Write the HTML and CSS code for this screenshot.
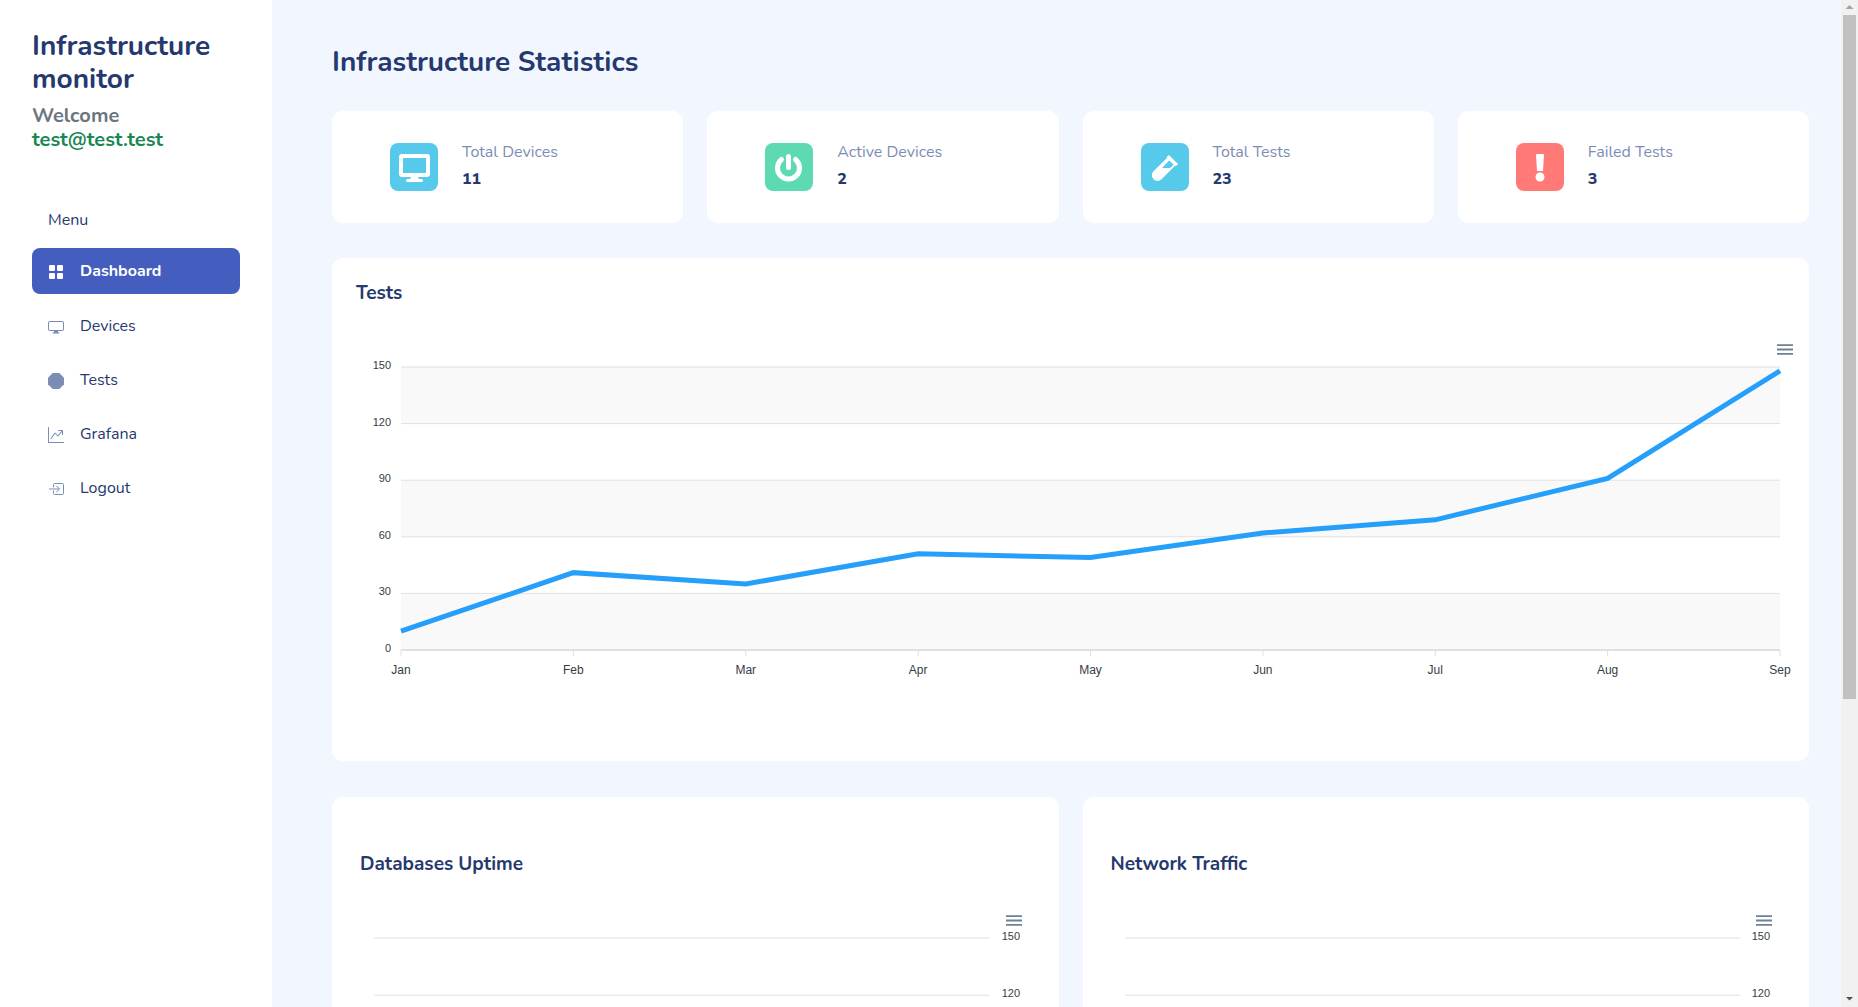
FILE: index.html
```html
<!DOCTYPE html>
<html lang="en">
<head>
<meta charset="utf-8">
<title>Infrastructure monitor</title>
<link rel="stylesheet" href="styles.css">
</head>
<body>
<aside class="sidebar">
  <header class="brand">
    <h1 class="brand-name">Infrastructure monitor</h1>
    <p class="welcome">Welcome<br><span class="user">test@test.test</span></p>
  </header>
  <nav class="menu" aria-label="Menu">
    <p class="menu-title">Menu</p>
    <a class="menu-link active" href="#"><svg class="menu-icon" viewBox="0 0 16 16" fill="currentColor"><rect x="1" y="1" width="6" height="6" rx="1"/><rect x="9" y="1" width="6" height="6" rx="1"/><rect x="1" y="9" width="6" height="6" rx="1"/><rect x="9" y="9" width="6" height="6" rx="1"/></svg>Dashboard</a>
    <a class="menu-link" href="#"><svg class="menu-icon" viewBox="0 0 16 16" fill="currentColor"><path d="M2 2h12a2 2 0 0 1 2 2v6a2 2 0 0 1-2 2h-4c0 .7.1 1.200.25 1.500H11a.5.5 0 0 1 0 1H5a.5.5 0 0 1 0-1h.75c.15-.3.25-.8.25-1.500H2a2 2 0 0 1-2-2V4a2 2 0 0 1 2-2zm0 1a1 1 0 0 0-1 1v6a1 1 0 0 0 1 1h12a1 1 0 0 0 1-1V4a1 1 0 0 0-1-1z"/></svg>Devices</a>
    <a class="menu-link" href="#"><svg class="menu-icon" viewBox="0 0 16 16" fill="currentColor"><path d="M4.700 0h6.600L16 4.700v6.600L11.300 16H4.700L0 11.300V4.700z"/></svg>Tests</a>
    <a class="menu-link" href="#"><svg class="menu-icon" viewBox="0 0 16 16" fill="currentColor"><path d="M0 0h1v15h15v1H0zM10 3.500a.5.5 0 0 1 .5-.5h4a.5.5 0 0 1 .5.5v4a.5.5 0 0 1-1 0V4.900l-3.600 4.400a.5.5 0 0 1-.75.05L7.060 6.730l-3.650 5.070a.5.5 0 0 1-.82-.6l4-5.500a.5.5 0 0 1 .76-.05l2.600 2.600L13.450 4H10.500a.5.5 0 0 1-.5-.5z"/></svg>Grafana</a>
    <a class="menu-link" href="#"><svg class="menu-icon" viewBox="0 0 16 16" fill="none" stroke="currentColor" stroke-linecap="round" stroke-linejoin="round"><path d="M5.500 6V3.500a1 1 0 0 1 1-1h8a1 1 0 0 1 1 1v9a1 1 0 0 1-1 1h-8a1 1 0 0 1-1-1V10M1.500 8h9.500M8.500 5l3 3-3 3"/></svg>Logout</a>
  </nav>
</aside>
<main class="content">
  <h2 class="page-title">Infrastructure Statistics</h2>
  <section class="stats">
    <article class="card stat">
      <span class="stat-icon blue"><svg viewBox="0 0 48 48" fill="#fff"><path fill-rule="evenodd" d="M12 11h25a3 3 0 0 1 3 3v17a3 3 0 0 1-3 3h-9l1 2h2.500a1.500 1.500 0 0 1 0 3h-14a1.500 1.500 0 0 1 0-3H20l1-2h-9a3 3 0 0 1-3-3V14a3 3 0 0 1 3-3zm1 4v15h23V15z"/></svg></span>
      <div><h3 class="stat-label">Total Devices</h3><p class="stat-value">11</p></div>
    </article>
    <article class="card stat">
      <span class="stat-icon green"><svg viewBox="0 0 48 48" fill="none" stroke="#fff" stroke-width="5" stroke-linecap="round"><path d="M23.500 13.500v11M16.500 16.500a11 11 0 1 0 14 0"/></svg></span>
      <div><h3 class="stat-label">Active Devices</h3><p class="stat-value">2</p></div>
    </article>
    <article class="card stat">
      <span class="stat-icon blue"><svg viewBox="0 0 48 48" fill="#fff"><path fill-rule="evenodd" d="M28 12l9 9-2 2-1-.3L20.500 36.300a5.600 5.600 0 0 1-8-8L26 15l-.3-1zM28.300 17.500L21 25h8l3.700-3.200z"/></svg></span>
      <div><h3 class="stat-label">Total Tests</h3><p class="stat-value">23</p></div>
    </article>
    <article class="card stat">
      <span class="stat-icon red"><svg viewBox="0 0 48 48" fill="#fff"><path d="M21 11h6a1 1 0 0 1 1 1l-1 16h-6l-1-16a1 1 0 0 1 1-1z"/><circle cx="24" cy="34" r="4.500"/></svg></span>
      <div><h3 class="stat-label">Failed Tests</h3><p class="stat-value">3</p></div>
    </article>
  </section>
  <section class="card tests">
    <h3 class="card-title">Tests</h3>
    <div class="toolbar"><button class="chart-menu" type="button" aria-label="Chart menu"><svg viewBox="3 6 18 12"><path d="M3 18h18v-2H3v2zm0-5h18v-2H3v2zm0-7v2h18V6H3z"/></svg></button></div>
    <svg class="plot plot-main" role="img" aria-label="Tests per month">
      <g fill="#f9f9f9"><rect width="100%" height="20%"/><rect y="40%" width="100%" height="20%"/><rect y="80%" width="100%" height="20%"/></g>
      <g class="grid"><line x2="100%"/><line y1="20%" x2="100%" y2="20%"/><line y1="40%" x2="100%" y2="40%"/><line y1="60%" x2="100%" y2="60%"/><line y1="80%" x2="100%" y2="80%"/><line class="axis" y1="100%" x2="100%" y2="100%"/></g>
      <svg class="ticks" y="100%" width="100%" height="6"><path d="M0 0v6"/><line x1="12.500%" x2="12.500%" y2="6"/><line x1="25%" x2="25%" y2="6"/><line x1="37.500%" x2="37.500%" y2="6"/><line x1="50%" x2="50%" y2="6"/><line x1="62.500%" x2="62.500%" y2="6"/><line x1="75%" x2="75%" y2="6"/><line x1="87.500%" x2="87.500%" y2="6"/><line x1="100%" x2="100%" y2="6"/></svg>
      <svg class="series" width="100%" height="100%" viewBox="0 0 8 150" preserveAspectRatio="none"><polyline points="0,140 1,109 2,115 3,99 4,101 5,88 6,81 7,59 8,2"/></svg>
      <g class="y-labels"><text x="-10" y="0" dy="2">150</text><text x="-10" y="20%" dy="2">120</text><text x="-10" y="40%" dy="2">90</text><text x="-10" y="60%" dy="2">60</text><text x="-10" y="80%" dy="2">30</text><text x="-10" y="100%" dy="2">0</text></g>
      <g class="x-labels"><text x="0" y="100%" dy="24">Jan</text><text x="12.500%" y="100%" dy="24">Feb</text><text x="25%" y="100%" dy="24">Mar</text><text x="37.500%" y="100%" dy="24">Apr</text><text x="50%" y="100%" dy="24">May</text><text x="62.500%" y="100%" dy="24">Jun</text><text x="75%" y="100%" dy="24">Jul</text><text x="87.500%" y="100%" dy="24">Aug</text><text x="100%" y="100%" dy="24">Sep</text></g>
    </svg>
  </section>
  <section class="pair">
    <article class="card small">
      <h3 class="card-title">Databases Uptime</h3>
      <div class="toolbar"><button class="chart-menu" type="button" aria-label="Chart menu"><svg viewBox="3 6 18 12"><path d="M3 18h18v-2H3v2zm0-5h18v-2H3v2zm0-7v2h18V6H3z"/></svg></button></div>
      <div class="small-chart"><svg class="plot"><g class="grid"><line x2="100%"/><line y1="20%" x2="100%" y2="20%"/></g></svg>
      <svg class="plot scale"><g class="y-labels"><text x="100%" y="0" dy="2">150</text><text x="100%" y="20%" dy="2">120</text></g></svg></div>
    </article>
    <article class="card small">
      <h3 class="card-title">Network Traffic</h3>
      <div class="toolbar"><button class="chart-menu" type="button" aria-label="Chart menu"><svg viewBox="3 6 18 12"><path d="M3 18h18v-2H3v2zm0-5h18v-2H3v2zm0-7v2h18V6H3z"/></svg></button></div>
      <div class="small-chart"><svg class="plot"><g class="grid"><line x2="100%"/><line y1="20%" x2="100%" y2="20%"/></g></svg>
      <svg class="plot scale"><g class="y-labels"><text x="100%" y="0" dy="2">150</text><text x="100%" y="20%" dy="2">120</text></g></svg></div>
    </article>
  </section>
</main>
<div class="scrollbar" aria-hidden="true">
  <svg class="arrow dim" viewBox="0 0 17 15"><path d="M4.500 9l4-4 4 4z"/></svg>
  <div class="track"><div class="thumb"></div></div>
  <svg class="arrow" viewBox="0 0 17 15"><path d="M5 5h7L8.500 8.500z"/></svg>
</div>
</body>
</html>
```
FILE: styles.css
```css
* { box-sizing: border-box; }
body {
  margin: 0;
  display: flex;
  height: 100vh;
  overflow: hidden;
  background: #f2f7ff;
  color: #25396f;
  font: 16px/24px Nunito, "Open Sans", sans-serif;
}
h1, h2, h3, p { margin: 0; }
.sidebar { flex: none; width: 272px; padding: 30px 32px; background: #fff; }
.brand-name { font-size: 28px; line-height: 33px; font-weight: 700; }
.welcome { margin-top: 8px; font-size: 20px; line-height: 24px; font-weight: 700; color: #6c757d; }
.user { color: #198754; }
.menu { display: flex; flex-direction: column; gap: 8px; margin-top: 56px; }
.menu-title { padding: 0 16px; margin-bottom: 8px; }
.menu-link {
  display: flex; align-items: center; gap: 16px;
  height: 46px; padding: 1px 16px 0;
  border-radius: 8px; color: inherit; text-decoration: none;
}
.menu-icon { width: 16px; height: 16px; margin-top: 2px; color: #7c8db5; }
.active { padding-top: 0; background: #435ebe; color: #fff; font-weight: 700; }
.active .menu-icon { color: #fff; }
.content { flex: 1; min-width: 0; padding: 45px 32px 0 60px; }
.page-title { font-size: 28px; line-height: 35px; font-weight: 700; }
.card { background: #fff; border-radius: 11px; }
.stats { display: grid; grid-template-columns: repeat(4, 1fr); gap: 24px; margin-top: 31px; }
.stat { display: flex; align-items: flex-start; gap: 24px; height: 112px; padding: 32px 58px 0; }
.stat > div { margin-top: -3px; }
.stat-icon { flex: none; width: 48px; height: 48px; border-radius: 8px; }
.stat-icon svg { display: block; }
.blue { background: #57caeb; }
.green { background: #5ddab4; }
.red { background: #ff7976; }
.stat-label { font-size: 16px; line-height: 24px; font-weight: 400; color: #7c8db5; }
.stat-value { margin-top: 3px; line-height: 24px; font-weight: 800; }
.tests { height: 503px; margin-top: 35px; padding: 23px 16px 0 24px; }
.card-title { font-size: 19px; line-height: 24px; font-weight: 700; }
.toolbar { display: flex; justify-content: flex-end; margin-top: 39px; }
.chart-menu { width: 16px; height: 11px; padding: 0; border: 0; background: none; }
.chart-menu svg { display: block; width: 16px; height: 11px; fill: #6e8192; }
.plot { display: block; flex: 1; min-width: 0; height: 283px; overflow: visible; }
.plot-main { width: calc(100% - 58px); margin: 12px 0 0 45px; }
.grid { stroke: #e0e0e0; }
.axis { stroke-width: 2; }
.ticks { stroke: #e0e0e0; overflow: visible; }
.series { overflow: visible; fill: none; stroke: #269ffb; }
.series polyline { stroke-width: 5px; vector-effect: non-scaling-stroke; }
.y-labels, .x-labels { fill: #373d3f; font-family: "Liberation Sans", Arial, sans-serif; }
.y-labels { font-size: 11px; text-anchor: end; }
.x-labels { font-size: 12px; text-anchor: middle; }
.pair { display: grid; grid-template-columns: 1fr 1fr; gap: 24px; margin-top: 36px; }
.small { height: 536px; padding: 55px 37px 0 28px; }
.small-chart { display: flex; margin: 12px 2px 0 14px; }
.small-chart .plot { height: 286px; }
.small-chart .scale { flex: none; width: 30px; }
.scrollbar { flex: none; display: flex; flex-direction: column; width: 17px; background: #f1f1f1; }
.arrow { width: 17px; height: 15px; fill: #505050; }
.dim { fill: #a3a3a3; }
.track { flex: 1; padding: 0 2px; }
.thumb { height: 70%; background: #c1c1c1; }
```
